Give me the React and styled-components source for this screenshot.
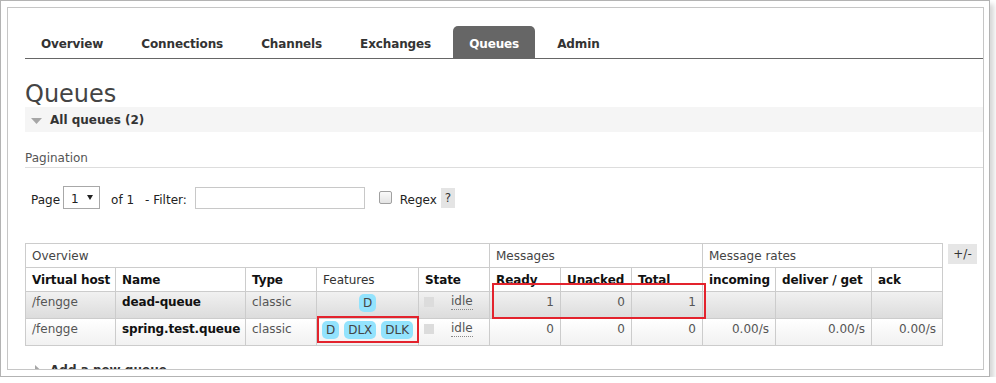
import React from 'react';
import styled, { createGlobalStyle } from 'styled-components';

const GlobalStyle = createGlobalStyle`
  html, body { margin: 0; padding: 0; background: #fff; }
  body {
    font-family: "DejaVu Sans", Verdana, sans-serif;
    font-size: 12px;
    color: #333;
  }
  * { box-sizing: border-box; }
`;

const Frame = styled.div`
  width: 990px;
  height: 377px;
  border: 1px solid #b3b3b3;
  padding: 6px 5px 6px 6px;
  background: #fff;
  box-shadow: 4px 4px 5px rgba(0, 0, 0, 0.16);
`;

const Viewport = styled.div`
  height: 363px;
  border: 1px solid #c6c6c6;
  overflow: hidden;
  padding-left: 17px;
`;

const Tabs = styled.ul`
  display: flex;
  list-style: none;
  margin: 18px 0 0;
  padding: 0;
  border-bottom: 1px solid #666;
`;

const Tab = styled.li`
  padding: 10px 16px 6px;
  line-height: 16px;
  margin-right: 6px;
  font-weight: bold;
  letter-spacing: -0.12px;
  color: ${(p) => (p.$active ? '#fff' : '#333')};
  background: ${(p) => (p.$active ? '#666' : 'transparent')};
  border-radius: 5px 5px 0 0;
`;

const Title = styled.h1`
  margin: 22px 0 0;
  font-size: 24px;
  line-height: 26px;
  font-weight: normal;
  color: #444;
`;

const SectionHeader = styled.h2`
  display: flex;
  align-items: center;
  margin: ${(p) => p.$mt || 0}px 0 0;
  padding: 5px 6px 4px;
  line-height: 16px;
  font-size: 12px;
  font-weight: bold;
  color: #333;
  background: ${(p) => (p.$shaded ? '#f5f5f5' : 'transparent')};
`;

const Toggle = styled.svg`
  width: 11px;
  height: 11px;
  margin-right: 8px;
  flex: none;
`;

const SubHeading = styled.h3`
  margin: 18px 0 0;
  padding-bottom: 1px;
  border-bottom: 1px solid #ddd;
  font-size: 12px;
  line-height: 16px;
  font-weight: normal;
  color: #555;
`;

const PagerRow = styled.div`
  display: flex;
  align-items: center;
  height: 23px;
  margin-top: 18px;
  padding-left: 6px;
  color: #222;
  line-height: 16px;
`;

const Label = styled.span`
  padding-top: 4px;
  margin-left: ${(p) => p.$l || 0}px;
`;

const FakeSelect = styled.div`
  display: flex;
  align-items: center;
  justify-content: space-between;
  width: 37px;
  height: 23px;
  margin-left: 3px;
  padding: 0 6px 0 7px;
  border: 1px solid #a8a8a8;
  background: #fff;
  color: #222;
`;

const SelectValue = styled.span`
  padding-top: 3px;
`;

const FilterInput = styled.input`
  width: 170px;
  height: 22px;
  margin-left: 8px;
  border: 1px solid #c8c8c8;
  padding: 0 4px;
  font: inherit;
  outline: none;
`;

const Check = styled.input`
  appearance: none;
  width: 13px;
  height: 13px;
  margin: 0 0 0 14px;
  border: 1px solid #a0a0a0;
  border-radius: 2px;
  background: linear-gradient(#fafafa, #e4e4e4);
`;

const Help = styled.span`
  display: inline-flex;
  align-items: center;
  justify-content: center;
  width: 14px;
  height: 20px;
  margin-left: 4px;
  background: #e4e4e4;
  color: #333;
`;

const TableBlock = styled.div`
  display: flex;
  align-items: flex-start;
  gap: 5px;
  margin-top: 34px;
`;

const TableArea = styled.div`
  position: relative;
`;

const Grid = styled.div`
  display: grid;
  grid-template-columns: 90px 130px 71px 102px 71px 71px 71px 71px 73px 96px 71px;
  border-left: 1px solid #ccc;
  border-top: 1px solid #ccc;
`;

const Cell = styled.div`
  border-right: 1px solid #ccc;
  border-bottom: 1px solid #ccc;
  padding: 0 6px;
  line-height: 16px;
  white-space: nowrap;
`;

const GroupCell = styled(Cell)`
  grid-column: span ${(p) => p.$span};
  height: 24px;
  padding-top: 4px;
  color: #444;
`;

const HeadCell = styled(Cell)`
  height: 24px;
  padding-top: 4px;
  font-weight: ${(p) => (p.$plain ? 'normal' : 'bold')};
  letter-spacing: ${(p) => (p.$plain ? '0' : '-0.1px')};
  color: ${(p) => (p.$plain ? '#333' : '#111')};
`;

const BodyCell = styled(Cell)`
  height: 27px;
  padding-top: 2px;
  color: #555;
  text-align: ${(p) => p.$align || 'left'};
  font-weight: ${(p) => (p.$bold ? 'bold' : 'normal')};
  ${(p) => (p.$bold ? 'color: #111; letter-spacing: -0.15px;' : '')}
  background: ${(p) =>
    p.$alt
      ? 'linear-gradient(#f1f1f1, #dcdcdc)'
      : 'linear-gradient(#ffffff, #f1f1f1)'};
`;

const FeatureCell = styled(BodyCell)`
  display: flex;
  justify-content: center;
  align-items: flex-start;
  gap: 5px;
  padding-top: 2px;
`;

const Badge = styled.span`
  display: inline-block;
  padding: 0 4px;
  line-height: 18px;
  height: 18px;
  border-radius: 5px;
  background: #93e3fd;
  color: #444;
`;

const StateCell = styled(BodyCell)`
  display: flex;
  align-items: flex-start;
  padding-left: 5px;
`;

const StateDot = styled.span`
  width: 10px;
  height: 10px;
  margin-top: 3px;
  background: #dcdcdc;
  flex: none;
`;

const Status = styled.span`
  margin-left: 17px;
  color: #555;
  border-bottom: 1px dotted #888;
  line-height: 15px;
`;

const Highlight = styled.div`
  position: absolute;
  left: ${(p) => p.$x}px;
  top: ${(p) => p.$y}px;
  width: ${(p) => p.$w}px;
  height: ${(p) => p.$h}px;
  border: 2px solid #e3232d;
  pointer-events: none;
`;

const Toggler = styled.div`
  width: 29px;
  height: 20px;
  margin-top: 1px;
  display: flex;
  align-items: center;
  justify-content: center;
  background: #e6e6e6;
  color: #333;
`;

const DownArrow = () => (
  <Toggle viewBox="0 0 11 11">
    <polygon points="0,3 11,3 5.5,9" fill="#a6a6a6" />
  </Toggle>
);

const RightArrow = () => (
  <Toggle viewBox="0 0 11 11">
    <polygon points="4,0 10,5.5 4,11" fill="#a6a6a6" />
  </Toggle>
);

const tabs = ['Overview', 'Connections', 'Channels', 'Exchanges', 'Queues', 'Admin'];

const rows = [
  {
    vhost: '/fengge',
    name: 'dead-queue',
    type: 'classic',
    features: ['D'],
    state: 'idle',
    ready: '1',
    unacked: '0',
    total: '1',
    rates: ['', '', ''],
    alt: true,
  },
  {
    vhost: '/fengge',
    name: 'spring.test.queue',
    type: 'classic',
    features: ['D', 'DLX', 'DLK'],
    state: 'idle',
    ready: '0',
    unacked: '0',
    total: '0',
    rates: ['0.00/s', '0.00/s', '0.00/s'],
    alt: false,
  },
];

export default function App() {
  return (
    <>
      <GlobalStyle />
      <Frame>
        <Viewport>
          <Tabs>
            {tabs.map((t) => (
              <Tab key={t} $active={t === 'Queues'}>
                {t}
              </Tab>
            ))}
          </Tabs>
          <Title>Queues</Title>
          <SectionHeader $shaded>
            <DownArrow />
            All queues (2)
          </SectionHeader>
          <SubHeading>Pagination</SubHeading>
          <PagerRow>
            <Label>Page</Label>
            <FakeSelect>
              <SelectValue>1</SelectValue>
              <svg width="6" height="5" viewBox="0 0 6 5">
                <polygon points="0,0 6,0 3,5" fill="#222" />
              </svg>
            </FakeSelect>
            <Label $l={11}>of 1</Label>
            <Label $l={11}>- Filter:</Label>
            <FilterInput type="text" />
            <Check type="checkbox" />
            <Label $l={8}>Regex</Label>
            <Help>?</Help>
          </PagerRow>
          <TableBlock>
            <TableArea>
              <Grid>
                <GroupCell $span={5}>Overview</GroupCell>
                <GroupCell $span={3}>Messages</GroupCell>
                <GroupCell $span={3}>Message rates</GroupCell>

                <HeadCell>Virtual host</HeadCell>
                <HeadCell>Name</HeadCell>
                <HeadCell>Type</HeadCell>
                <HeadCell $plain>Features</HeadCell>
                <HeadCell>State</HeadCell>
                <HeadCell>Ready</HeadCell>
                <HeadCell>Unacked</HeadCell>
                <HeadCell>Total</HeadCell>
                <HeadCell>incoming</HeadCell>
                <HeadCell>deliver / get</HeadCell>
                <HeadCell>ack</HeadCell>

                {rows.map((r) => (
                  <React.Fragment key={r.name}>
                    <BodyCell $alt={r.alt}>{r.vhost}</BodyCell>
                    <BodyCell $alt={r.alt} $bold>
                      {r.name}
                    </BodyCell>
                    <BodyCell $alt={r.alt}>{r.type}</BodyCell>
                    <FeatureCell $alt={r.alt}>
                      {r.features.map((f) => (
                        <Badge key={f}>{f}</Badge>
                      ))}
                    </FeatureCell>
                    <StateCell $alt={r.alt}>
                      <StateDot />
                      <Status>{r.state}</Status>
                    </StateCell>
                    <BodyCell $alt={r.alt} $align="right">
                      {r.ready}
                    </BodyCell>
                    <BodyCell $alt={r.alt} $align="right">
                      {r.unacked}
                    </BodyCell>
                    <BodyCell $alt={r.alt} $align="right">
                      {r.total}
                    </BodyCell>
                    {r.rates.map((v, i) => (
                      <BodyCell key={i} $alt={r.alt} $align="right">
                        {v}
                      </BodyCell>
                    ))}
                  </React.Fragment>
                ))}
              </Grid>
              <Highlight $x={292} $y={73} $w={102} $h={27} />
              <Highlight $x={467} $y={40} $w={214} $h={36} />
            </TableArea>
            <Toggler>+/-</Toggler>
          </TableBlock>
          <SectionHeader $mt={11}>
            <RightArrow />
            Add a new queue
          </SectionHeader>
        </Viewport>
      </Frame>
    </>
  );
}
